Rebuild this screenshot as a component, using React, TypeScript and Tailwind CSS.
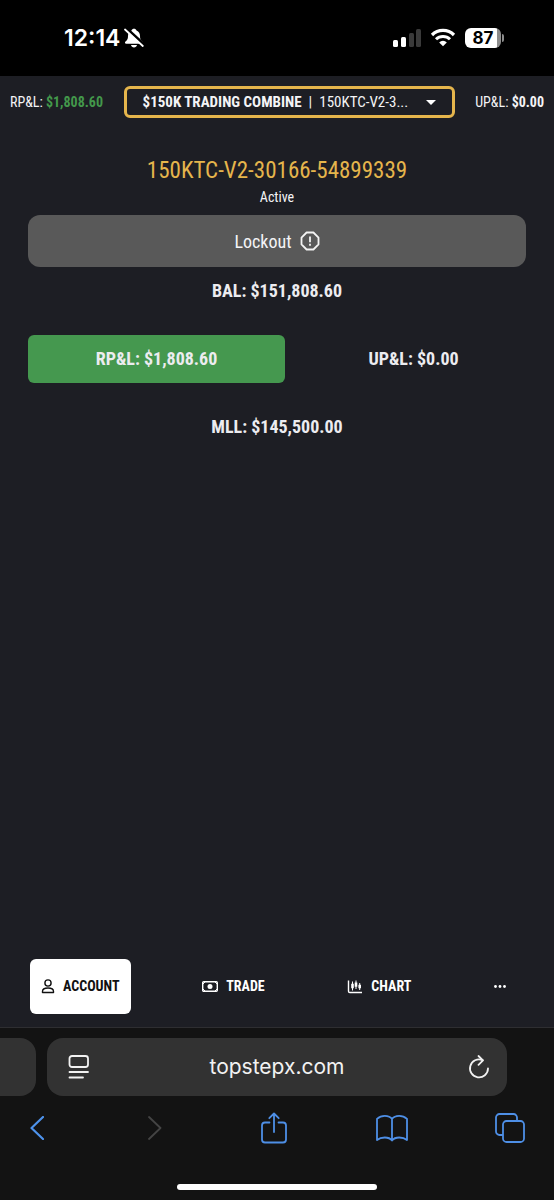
import { useState } from 'react'
import type { ReactNode } from 'react'

const accounts = [
  { id: '150KTC-V2-30166-54899339', plan: '$150K TRADING COMBINE', short: '150KTC-V2-3...' },
]

function StatusBar() {
  return (
    <div className="flex h-[76px] items-center justify-between bg-black pl-16 pr-[50px] text-white">
      <div className="flex items-center gap-1">
        <span className="font-['Inter',sans-serif] text-[23px] font-semibold leading-7">12:14</span>
        <svg className="h-5 w-5" viewBox="0 0 20 20" fill="none" aria-hidden="true">
          <path
            d="M10 .8c-1.2 0-2.1.6-2.5 1.6C5 3.400 4 5.400 4 8c0 3-.7 4-2.500 5.500-1 .9-.6 2.300.8 2.300h15.400c1.400 0 1.800-1.400.8-2.300C16.700 12 16 11 16 8c0-2.600-1-4.600-3.500-5.600C12.100 1.400 11.200.8 10 .8Z"
            fill="#fff"
          />
          <path d="M7 17h6c-.3 1.500-1.500 2.400-3 2.400S7.300 18.500 7 17Z" fill="#fff" />
          <path d="M2 0 20.500 17" stroke="#000" strokeWidth="3" />
          <path d="M1 1.500 18.800 18" stroke="#fff" strokeWidth="1.800" strokeLinecap="round" />
        </svg>
      </div>
      <div className="flex items-center gap-2">
        <svg className="h-5 w-8" viewBox="0 0 32 20" aria-hidden="true">
          <rect x="4" y="12" width="5" height="7" rx="1.500" fill="#fff" />
          <rect x="12" y="9" width="5" height="10" rx="1.500" fill="#fff" />
          <rect x="20" y="5" width="5" height="14" rx="1.500" fill="#3a3a3a" />
          <rect x="27" y="1" width="5" height="18" rx="1.500" fill="#3a3a3a" />
        </svg>
        <svg className="h-5 w-7" viewBox="0 0 28 20" fill="none" stroke="#fff" aria-hidden="true">
          <path d="M3 7a15.600 15.600 0 0 1 22 0" strokeWidth="3.200" />
          <path d="M7 11.300a10 10 0 0 1 14 0" strokeWidth="3" />
          <path d="M14 18.300 10.200 14.400a5.400 5.400 0 0 1 7.600 0Z" fill="#fff" stroke="none" />
        </svg>
        <div className="flex items-center gap-px">
          <div className="flex h-5 w-9 items-center justify-center overflow-hidden rounded-md bg-linear-to-r from-white from-88% to-[#8c8c8c] to-88% font-['Inter',sans-serif] text-[17px] font-bold leading-5 text-black">
            87
          </div>
          <div className="h-2 w-0.5 rounded-r-full bg-[#8c8c8c]" />
        </div>
      </div>
    </div>
  )
}

function Header({ account, onChange }: { account: string; onChange: (id: string) => void }) {
  const current = accounts.find((a) => a.id === account) ?? accounts[0]

  return (
    <header className="flex h-[52px] items-center justify-between px-[10px] text-[14px] leading-5">
      <p>
        RP&amp;L: <b className="text-[#43984b]">$1,808.60</b>
      </p>
      <div className="relative flex h-8 w-[62%] items-center justify-between rounded-md border-[3px] border-[#e5b54c] px-4 text-[15px]">
        <span className="flex min-w-0 gap-[7px] whitespace-nowrap">
          <b>{current.plan}</b>
          <span>|</span>
          <span>{current.short}</span>
        </span>
        <svg className="h-[5px] w-[10px] shrink-0" viewBox="0 0 10 5" fill="#fff" aria-hidden="true">
          <path d="M0 0h10L5 5Z" />
        </svg>
        <select
          aria-label="Account"
          value={account}
          onChange={(e) => onChange(e.target.value)}
          className="absolute inset-0 w-full cursor-pointer opacity-0"
        >
          {accounts.map((a) => (
            <option key={a.id} value={a.id}>
              {a.plan} | {a.id}
            </option>
          ))}
        </select>
      </div>
      <p>
        UP&amp;L: <b>$0.00</b>
      </p>
    </header>
  )
}

function AccountPanel({ account }: { account: string }) {
  return (
    <main className="flex flex-1 flex-col px-7 pt-[27px] text-center">
      <h1 className="text-[23px] leading-8 text-[#e5b54c]">{account}</h1>
      <p className="pt-px text-[14px] leading-[18px]">Active</p>
      <button
        type="button"
        className="mt-[9px] flex h-[52px] items-center justify-center gap-2 rounded-xl bg-[#595959] text-[18px]"
      >
        Lockout
        <svg className="h-5 w-5" viewBox="0 0 20 20" fill="none" stroke="#f4f4f4" strokeWidth="1.800" aria-hidden="true">
          <path d="M6.600 1.500h6.800l5.100 5.100v6.800l-5.100 5.100H6.600l-5.100-5.100V6.600Z" strokeLinejoin="round" />
          <path d="M10 5.400v5.800M10 12.800v2" />
        </svg>
      </button>
      <div className="flex flex-col text-[18px] font-bold leading-6 text-[#ececf0]">
        <p className="py-3">BAL: $151,808.60</p>
        <div className="-mr-4 mt-5 flex h-12">
          <p className="flex flex-1 items-center justify-center rounded-md bg-[#45984f]">RP&amp;L: $1,808.60</p>
          <p className="flex flex-1 items-center justify-center">UP&amp;L: $0.00</p>
        </div>
        <p className="mt-5 py-3">MLL: $145,500.00</p>
      </div>
    </main>
  )
}

function NavButton({ active, children }: { active?: boolean; children: ReactNode }) {
  return (
    <button
      type="button"
      className={
        active
          ? 'flex h-[55px] items-center gap-2 rounded-md bg-white px-[11px] text-[14px] font-bold text-[#111]'
          : 'flex h-[55px] items-center gap-2 rounded-md px-[11px] text-[14px] font-bold text-white'
      }
    >
      {children}
    </button>
  )
}

function BottomNav() {
  return (
    <nav className="flex items-center justify-between border-b border-[#2e2e31] pb-[13px] pl-[30px] pr-[37px]">
      <NavButton active>
        <svg className="h-4 w-[14px]" viewBox="0 0 14 16" fill="none" stroke="#111" strokeWidth="1.400" aria-hidden="true">
          <circle cx="7" cy="4" r="3.100" />
          <path d="M1.500 13.500v-1c0-2 2-3.500 5.500-3.500s5.500 1.500 5.500 3.500v1Z" strokeLinejoin="round" />
        </svg>
        ACCOUNT
      </NavButton>
      <NavButton>
        <svg className="h-3 w-4" viewBox="0 0 16 12" fill="none" aria-hidden="true">
          <rect x=".7" y=".7" width="14.600" height="9.600" rx="1" stroke="#fff" strokeWidth="1.400" />
          <circle cx="8" cy="5.500" r="2.500" fill="#fff" />
          <path d="M1 3 3 1M13 1l2 2M1 8l2 2M15 8l-2 2" stroke="#fff" />
        </svg>
        TRADE
      </NavButton>
      <NavButton>
        <svg className="h-4 w-4" viewBox="0 0 16 16" fill="none" stroke="#fff" aria-hidden="true">
          <path d="M1.500 1.500v10.700c0 .8.500 1.300 1.300 1.300H15" strokeWidth="1.400" />
          <path d="M5.500 2.500v9M9 1.500v8.500M12.700 4v7" />
          <path d="M5.500 4.800v4.400M9 3.500v4.300M12.700 5.800v3.400" strokeWidth="2.600" />
        </svg>
        CHART
      </NavButton>
      <NavButton>
        <svg className="h-[6px] w-3" viewBox="0 0 12 6" fill="#fff" role="img" aria-label="More">
          <circle cx="1.500" cy="2.500" r="1.400" />
          <circle cx="6" cy="2.500" r="1.400" />
          <circle cx="10.500" cy="2.500" r="1.400" />
        </svg>
      </NavButton>
    </nav>
  )
}

function ToolButton({ label, disabled, children }: { label: string; disabled?: boolean; children: ReactNode }) {
  return (
    <button type="button" aria-label={label} disabled={disabled} className="flex w-8 justify-center">
      {children}
    </button>
  )
}

function BrowserBar() {
  return (
    <footer className="bg-[#131313] pt-[10px] font-['Inter',sans-serif]">
      <div className="flex h-[58px] gap-[11px]">
        <div className="w-9 rounded-r-2xl bg-[#323232]" />
        <div className="mr-[47px] flex min-w-0 flex-1 items-center rounded-2xl bg-[#323232] px-[17px]">
          <button type="button" aria-label="Page menu" className="pl-1">
            <svg className="h-6 w-[22px]" viewBox="0 0 22 24" fill="none" stroke="#f2f2f2" strokeWidth="1.800" strokeLinecap="round">
              <rect x="1.500" y="1" width="18.500" height="11" rx="2.500" />
              <path d="M1.500 17H20M1.500 22.500H15" />
            </svg>
          </button>
          <input
            type="text"
            aria-label="Address"
            defaultValue="topstepx.com"
            className="min-w-0 flex-1 bg-transparent pr-1 text-center text-[21px] text-[#f2f2f2] outline-none"
          />
          <button type="button" aria-label="Reload">
            <svg className="h-6 w-[22px]" viewBox="0 0 22 24" fill="none" stroke="#f2f2f2" strokeWidth="1.800" strokeLinecap="round" strokeLinejoin="round">
              <path d="M14.500 5.100A9 9 0 1 0 20 13.500" />
              <path d="M10.500 1 15 5.300 10.500 9.800" />
            </svg>
          </button>
        </div>
      </div>
      <div className="flex h-16 items-center justify-between pl-[21px] pr-7">
        <ToolButton label="Back">
          <svg className="h-6 w-[14px]" viewBox="0 0 14 24" fill="none" stroke="#4e93ec" strokeWidth="2.200" strokeLinecap="round" strokeLinejoin="round">
            <path d="M13 1 1.500 12 13 23" />
          </svg>
        </ToolButton>
        <ToolButton label="Forward" disabled>
          <svg className="h-6 w-[14px]" viewBox="0 0 14 24" fill="none" stroke="#444" strokeWidth="1.800" strokeLinecap="round" strokeLinejoin="round">
            <path d="M1 1l11.500 11L1 23" />
          </svg>
        </ToolButton>
        <ToolButton label="Share">
          <svg className="h-8 w-7" viewBox="0 0 28 32" fill="none" stroke="#4e8fe6" strokeWidth="1.800" strokeLinecap="round" strokeLinejoin="round">
            <path d="M9.500 10.500H5A3 3 0 0 0 2 13.500v14a3 3 0 0 0 3 3h18a3 3 0 0 0 3-3v-14a3 3 0 0 0-3-3h-4.500" />
            <path d="M14 20V1.500M9.300 6.200 14 1.500l4.700 4.700" />
          </svg>
        </ToolButton>
        <ToolButton label="Bookmarks">
          <svg className="h-7 w-8" viewBox="0 0 32 28" fill="none" stroke="#4e8fe6" strokeWidth="1.800" strokeLinejoin="round">
            <path d="M16 5c-1.300-2-4-3.200-7.200-3.200S3 3 1 4.800V26c2-1.600 4.600-2.500 7.800-2.500S14.500 24.500 16 26.500c1.500-2 4-3 7.200-3S29 24.400 31 26V4.800c-2-1.800-4.600-3-7.800-3S17.300 3 16 5ZM16 5v21.500" />
          </svg>
        </ToolButton>
        <ToolButton label="Tabs">
          <svg className="h-[30px] w-[30px]" viewBox="0 0 30 30" fill="none" stroke="#4e8fe6" strokeWidth="1.800">
            <path d="M8 22H4.500A3.500 3.500 0 0 1 1 18.500v-14A3.500 3.500 0 0 1 4.500 1h14A3.500 3.500 0 0 1 22 4.500V8" />
            <rect x="8" y="8" width="21" height="21" rx="3.500" />
          </svg>
        </ToolButton>
      </div>
      <div className="flex justify-center pb-[10px] pt-6">
        <div className="h-[6px] w-[36%] rounded-full bg-white" />
      </div>
    </footer>
  )
}

export default function App() {
  const [account, setAccount] = useState(accounts[0].id)

  return (
    <div className="flex min-h-screen flex-col bg-[#1d1e24] font-['Roboto_Condensed','Liberation_Sans_Narrow','Roboto',sans-serif] text-[#f4f4f6]">
      <StatusBar />
      <Header account={account} onChange={setAccount} />
      <AccountPanel account={account} />
      <BottomNav />
      <BrowserBar />
    </div>
  )
}
